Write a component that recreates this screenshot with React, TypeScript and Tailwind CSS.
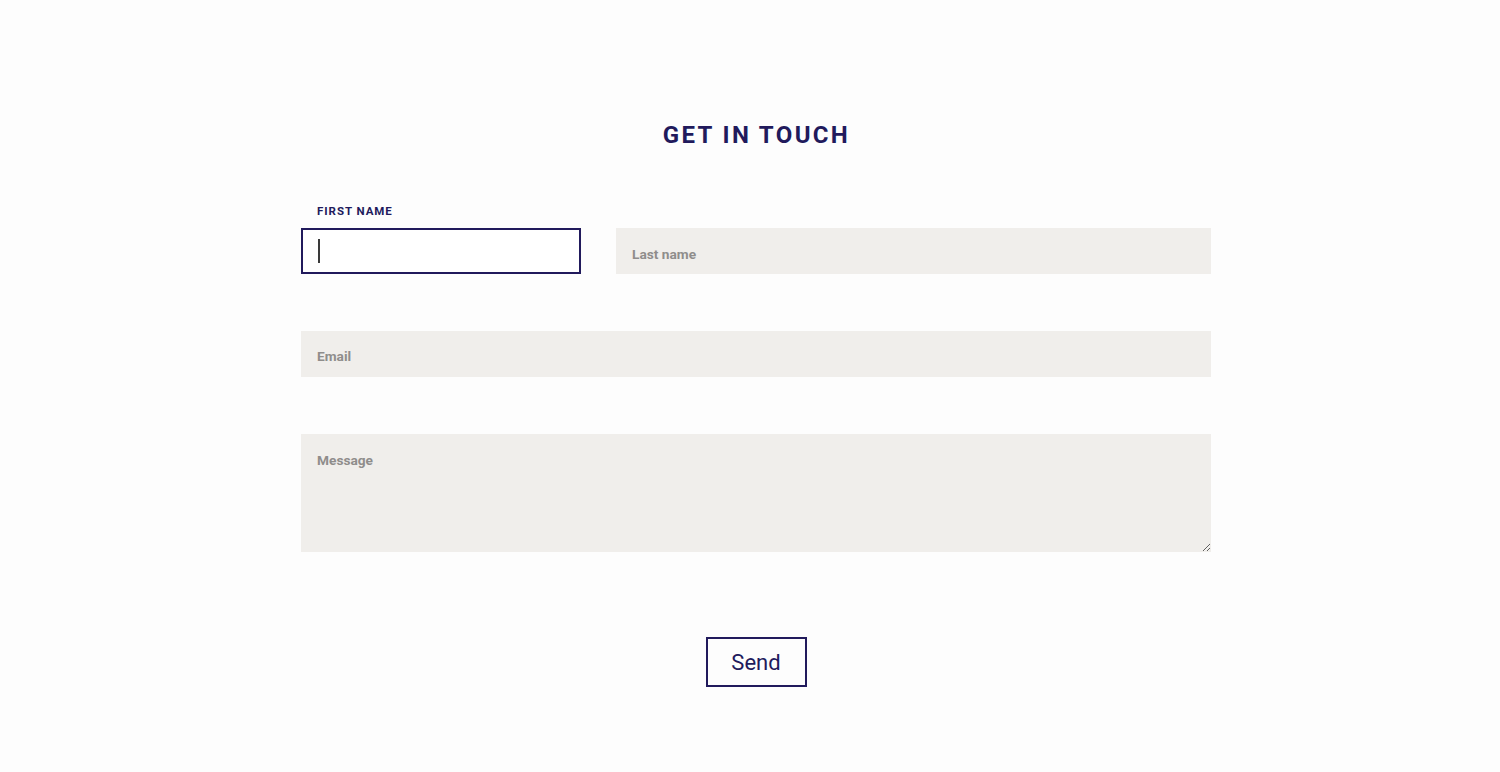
import React from "react";

export default function App() {
  return (
    <div
      className="w-[1500px] h-[772px] bg-[#fdfdfd] overflow-hidden"
      style={{ fontFamily: "Roboto, 'Liberation Sans', sans-serif" }}
    >
      <div className="pl-[301px] pt-[121px]">
        <div className="w-[910px] flex flex-col">
          <h1 className="text-center text-[24px] leading-[28px] font-bold tracking-[2.35px] text-[#211a5c] pl-[1px]">
            GET IN TOUCH
          </h1>

          <div className="flex gap-[35px] mt-[55px]">
            <div className="w-[280px] flex flex-col">
              <div className="pl-[16px] text-[11.5px] leading-[14px] font-bold tracking-[0.95px] text-[#211a5c] h-[14px]">
                FIRST NAME
              </div>
              <div className="mt-[10px] h-[46px] border-2 border-[#211a5c] bg-white flex items-center pl-[15px]">
                <span className="w-[2px] h-[24px] bg-[#3a3a3a]"></span>
              </div>
            </div>
            <div className="flex-1 flex flex-col">
              <div className="h-[14px]"></div>
              <div className="mt-[10px] h-[46px] bg-[#f0eeeb] flex items-center pl-[16px] text-[13.7px] font-bold text-[#8f8d8b] pt-[6px]">
                Last name
              </div>
            </div>
          </div>

          <div className="mt-[57px] h-[46px] bg-[#f0eeeb] flex items-center pl-[16px] text-[13.7px] font-bold text-[#8f8d8b] pt-[5px]">
            Email
          </div>

          <textarea
            placeholder="Message"
            className="mt-[57px] h-[118px] bg-[#f0eeeb] px-[16px] pt-[16px] text-[13.7px] font-bold text-[#8f8d8b] placeholder:text-[#8f8d8b] outline-none resize"
          />

          <div className="flex justify-center mt-[85px]">
            <button className="w-[101px] h-[50px] border-2 border-[#211a5c] text-[#211a5c] text-[22px] bg-transparent pt-[1px]">
              Send
            </button>
          </div>
        </div>
      </div>
    </div>
  );
}
